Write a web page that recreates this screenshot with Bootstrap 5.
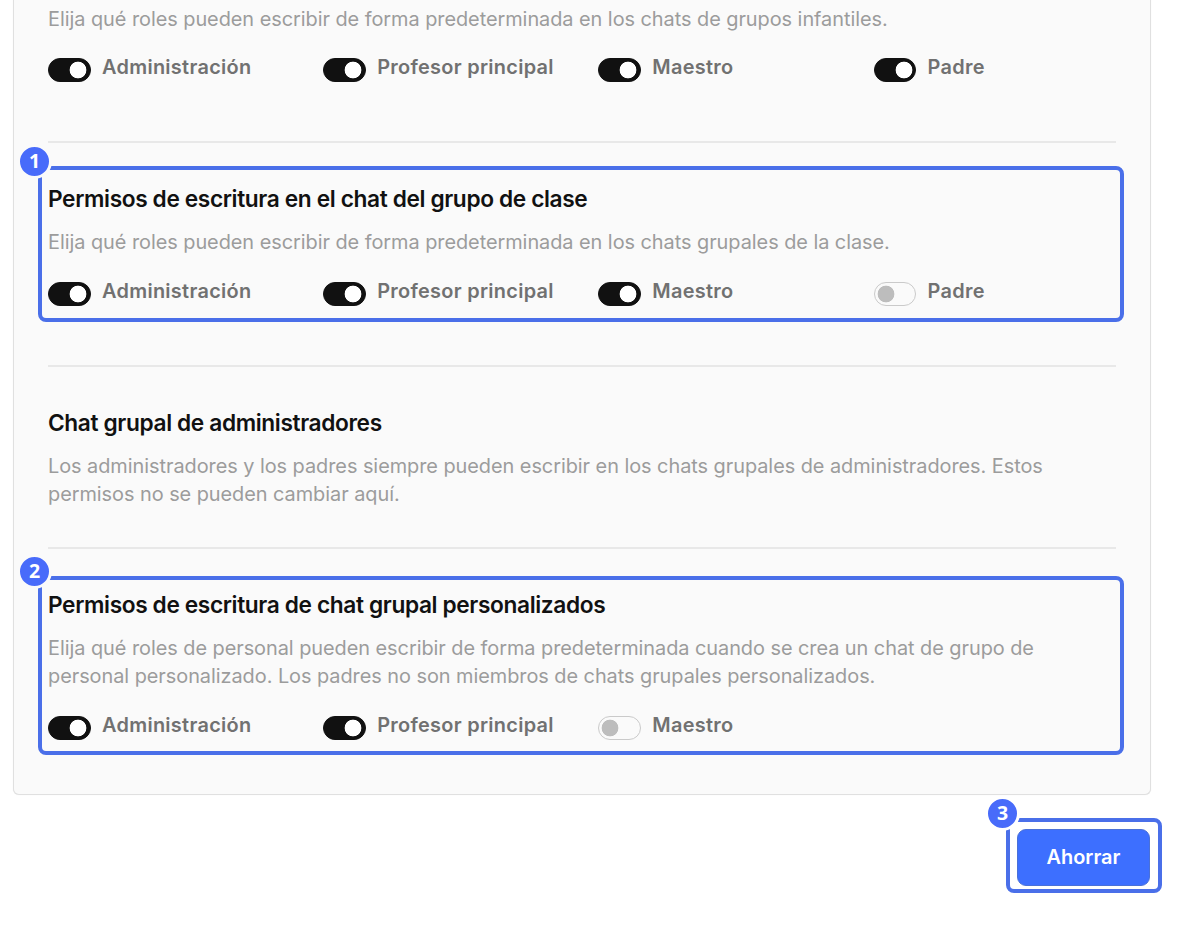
<!DOCTYPE html>
<html lang="es">
<head>
<meta charset="utf-8">
<meta name="viewport" content="width=device-width, initial-scale=1">
<title>Permisos de chat</title>
<link href="https://cdn.jsdelivr.net/npm/bootstrap@5.3.0/dist/css/bootstrap.min.css" rel="stylesheet">
<style>
body { font-family: Inter, "Liberation Sans", sans-serif; background: #fff; color: #111; height: 931px; overflow: hidden; }
.panel { width: 1137.5px; height: 795px; margin-left: 13px; padding: 4.5px 34px 0; background: #fafafa; border: 1px solid #e0e0e0; border-top: 0; border-radius: 0 0 6px 6px; box-shadow: 0 0 1px #e4e4e4; }
.perm { height: 224px; padding-top: 42px; border-top: 2px solid #e8e8e8; }
.perm-first { height: 136.5px; padding-top: 0; border-top: 0; }
.perm-first .roles { margin-top: 20px; }
.perm-info { height: 182px; }
.perm h2 { font-size: 22.7px; line-height: 28px; font-weight: 600; letter-spacing: -.37px; margin: 0 0 15px; }
.perm p { font-size: 19.9px; line-height: 28.4px; color: #9c9c9c; margin: 0; letter-spacing: -.04px; }
.roles { display: grid; grid-template-columns: repeat(4, 275.2px); margin-top: 20.6px; }
.role { font-size: 19.9px; line-height: 28px; font-weight: 600; color: #717171; letter-spacing: .3px; gap: 11.4px; }
.role .form-check-input { width: 42.6px; height: 24px; margin: 4.6px 0 0; border: 1.5px solid #cacaca; box-shadow: none; background-color: #fafafa; background-size: 24px 24px; background-repeat: no-repeat; background-image: radial-gradient(circle, #bdbdbd 8px, transparent 8.7px); background-position: -1px center; }
.role .form-check-input:checked { background-color: #111; border-color: #111; background-image: radial-gradient(circle, #fff 8px, transparent 8.7px); background-position: 17px center; }
.callout { position: absolute; border: 4px solid #4a6fe9; border-radius: 8px; pointer-events: none; }
.callout-row { left: -10px; right: -8px; top: 23px; height: 156px; }
.callout-tall { height: 179px; top: 27px; }
.callout-save { inset: -11px -12px -7px -11px; }
.step { position: absolute; left: -25px; top: -26px; width: 35px; height: 35px; border: 3px solid #fafafa; border-radius: 50%; background: #486bfa; color: #fff; font: 700 19.5px/28px "Open Sans", "Noto Sans", sans-serif; text-align: center; }
.callout-save .step { border-color: #fff; }
.save-wrap { width: 133px; margin: 34px 50px 0 auto; }
.btn-save { width: 133px; height: 57px; border-radius: 9px; font-size: 19.9px; font-weight: 600; padding: 0; --bs-btn-bg: #3d6fff; --bs-btn-border-color: #4a71d8; }
</style>
</head>
<body>
<main class="panel">
  <section class="perm perm-first">
    <p>Elija qué roles pueden escribir de forma predeterminada en los chats de grupos infantiles.</p>
    <div class="roles">
      <label class="role d-flex form-switch p-0"><input class="form-check-input" type="checkbox" role="switch" checked>Administración</label>
      <label class="role d-flex form-switch p-0"><input class="form-check-input" type="checkbox" role="switch" checked>Profesor principal</label>
      <label class="role d-flex form-switch p-0"><input class="form-check-input" type="checkbox" role="switch" checked>Maestro</label>
      <label class="role d-flex form-switch p-0"><input class="form-check-input" type="checkbox" role="switch" checked>Padre</label>
    </div>
  </section>
  <section class="perm position-relative">
    <h2>Permisos de escritura en el chat del grupo de clase</h2>
    <p>Elija qué roles pueden escribir de forma predeterminada en los chats grupales de la clase.</p>
    <div class="roles">
      <label class="role d-flex form-switch p-0"><input class="form-check-input" type="checkbox" role="switch" checked>Administración</label>
      <label class="role d-flex form-switch p-0"><input class="form-check-input" type="checkbox" role="switch" checked>Profesor principal</label>
      <label class="role d-flex form-switch p-0"><input class="form-check-input" type="checkbox" role="switch" checked>Maestro</label>
      <label class="role d-flex form-switch p-0"><input class="form-check-input" type="checkbox" role="switch">Padre</label>
    </div>
    <div class="callout callout-row"><span class="step">1</span></div>
  </section>
  <section class="perm perm-info">
    <h2>Chat grupal de administradores</h2>
    <p>Los administradores y los padres siempre pueden escribir en los chats grupales de administradores. Estos permisos no se pueden cambiar aquí.</p>
  </section>
  <section class="perm position-relative">
    <h2>Permisos de escritura de chat grupal personalizados</h2>
    <p>Elija qué roles de personal pueden escribir de forma predeterminada cuando se crea un chat de grupo de personal personalizado. Los padres no son miembros de chats grupales personalizados.</p>
    <div class="roles">
      <label class="role d-flex form-switch p-0"><input class="form-check-input" type="checkbox" role="switch" checked>Administración</label>
      <label class="role d-flex form-switch p-0"><input class="form-check-input" type="checkbox" role="switch" checked>Profesor principal</label>
      <label class="role d-flex form-switch p-0"><input class="form-check-input" type="checkbox" role="switch">Maestro</label>
    </div>
    <div class="callout callout-row callout-tall"><span class="step">2</span></div>
  </section>
</main>
<div class="save-wrap position-relative">
  <button class="btn btn-primary btn-save" type="button">Ahorrar</button>
  <div class="callout callout-save"><span class="step">3</span></div>
</div>
<script src="https://cdn.jsdelivr.net/npm/bootstrap@5.3.0/dist/js/bootstrap.bundle.min.js"></script>
</body>
</html>
